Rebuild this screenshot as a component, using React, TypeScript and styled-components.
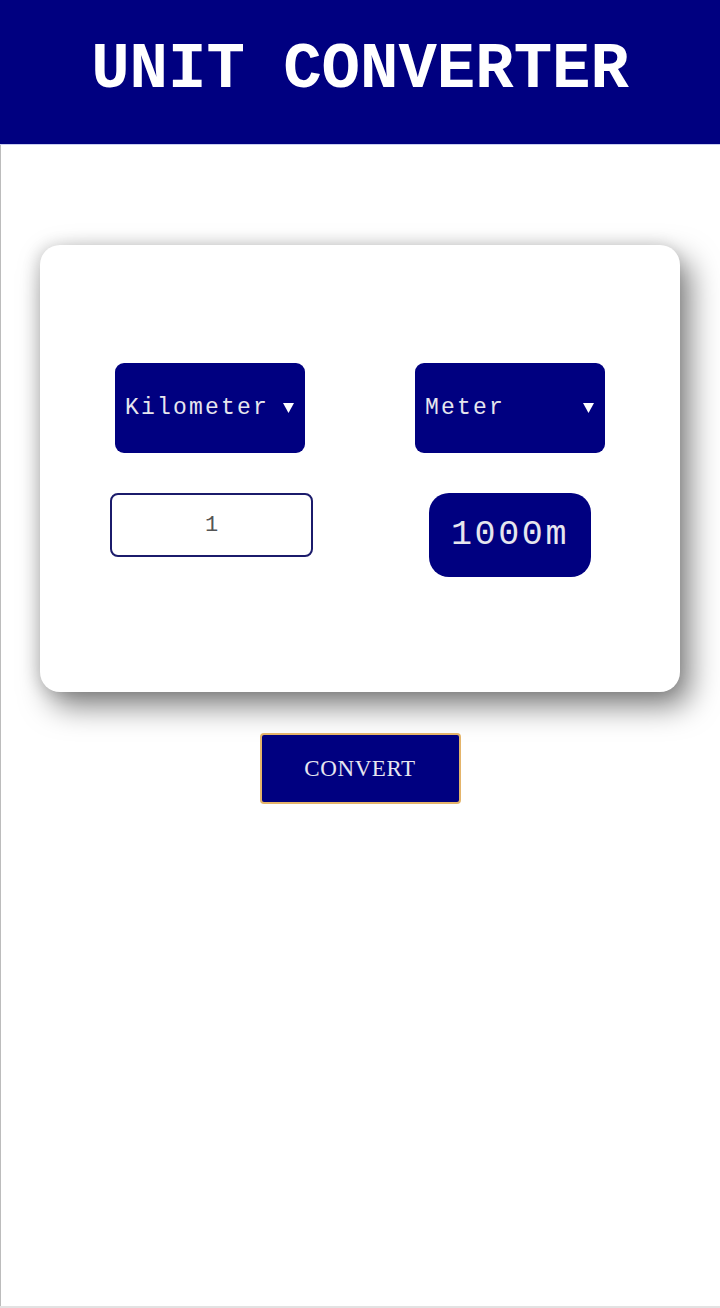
import { FC, useState } from 'react'
import styled, { createGlobalStyle } from 'styled-components'

const NAVY = '#000080'

const GlobalStyle = createGlobalStyle`
  html, body {
    margin: 0;
    padding: 0;
    background: #ffffff;
  }
  * {
    box-sizing: border-box;
  }
`

const Page = styled.div`
  min-height: 1308px;
  display: flex;
  flex-flow: column;
  align-items: center;
  border-bottom: 2px solid #e2e2e2;
  box-shadow: inset 1px 0 0 #bcbcbc;
  font-family: 'Liberation Mono', 'Courier New', monospace;
`

const Header = styled.header`
  align-self: stretch;
  height: 145px;
  background: ${NAVY};
  display: flex;
  align-items: center;
  justify-content: center;
  border-bottom: 1px solid #c8cdf0;
`

const Title = styled.h1`
  margin: 0 0 4px;
  color: #ffffff;
  font-family: 'Liberation Mono', 'Courier New', monospace;
  font-weight: 700;
  font-size: 64px;
  letter-spacing: 0;
`

const Card = styled.section`
  margin-top: 100px;
  width: 640px;
  background: #ffffff;
  border-radius: 20px;
  padding: 118px 20px 115px;
  box-shadow: 10px 14px 30px rgba(0, 0, 0, 0.5), -3px 0 16px rgba(0, 0, 0, 0.14);
  display: grid;
  grid-template-columns: 300px 300px;
  row-gap: 40px;
  justify-items: center;
  align-items: start;
`

const SelectBox = styled.div`
  width: 190px;
  height: 90px;
  background: ${NAVY};
  border-radius: 9px;
  display: flex;
  align-items: center;
  justify-content: space-between;
  padding: 0 11px 0 10px;
  color: #e6e6ee;
  font-size: 23px;
  letter-spacing: 2.2px;
  cursor: pointer;
`

const Arrow = styled.svg`
  width: 11px;
  height: 10px;
  flex: none;
`

const ValueInput = styled.input`
  width: 203px;
  height: 64px;
  margin-left: 3px;
  border: 2px solid #1b1b6b;
  border-radius: 8px;
  background: #ffffff;
  text-align: center;
  font-family: 'Liberation Mono', 'Courier New', monospace;
  font-size: 22px;
  color: #555555;
  padding: 0;
  outline: none;
`

const Result = styled.div`
  width: 162px;
  height: 84px;
  background: ${NAVY};
  border-radius: 20px;
  display: flex;
  align-items: center;
  justify-content: center;
  color: #e6e6ee;
  font-size: 35px;
  letter-spacing: 2.6px;
`

const ConvertButton = styled.button`
  margin-top: 41px;
  width: 201px;
  height: 71px;
  background: ${NAVY};
  border: 2px solid #e4b46a;
  border-radius: 4px;
  color: #e6e6f0;
  font-family: 'Liberation Serif', 'Times New Roman', serif;
  font-size: 23px;
  letter-spacing: 0.6px;
  cursor: pointer;
`

interface UnitSelectProps {
  label: string
}

const UnitSelect: FC<UnitSelectProps> = ({ label }) => (
  <SelectBox>
    <span>{label}</span>
    <Arrow viewBox="0 0 11 10">
      <polygon points="0,0 11,0 5.5,10" fill="#ffffff" />
    </Arrow>
  </SelectBox>
)

const App: FC = () => {
  const [value, setValue] = useState('1')

  return (
    <Page>
      <GlobalStyle />
      <Header>
        <Title>UNIT CONVERTER</Title>
      </Header>
      <Card>
        <UnitSelect label="Kilometer" />
        <UnitSelect label="Meter" />
        <ValueInput value={value} onChange={(e) => setValue(e.target.value)} />
        <Result>1000m</Result>
      </Card>
      <ConvertButton>CONVERT</ConvertButton>
    </Page>
  )
}

export default App
